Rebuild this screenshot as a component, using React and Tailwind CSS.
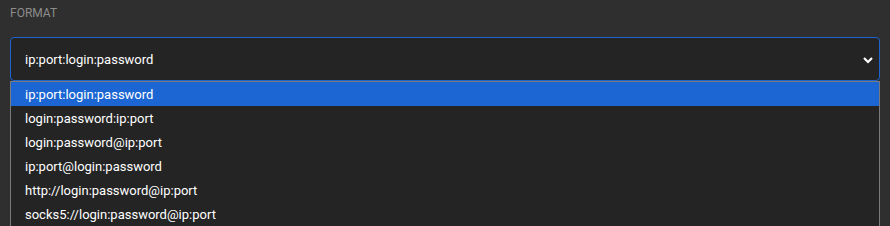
import React from "react";

const options = [
  "ip:port:login:password",
  "login:password:ip:port",
  "login:password@ip:port",
  "ip:port@login:password",
  "http://login:password@ip:port",
  "socks5://login:password@ip:port",
];

function App() {
  return (
    <div className="w-[890px] h-[226px] overflow-hidden bg-[#2f2f2f] font-['Roboto',sans-serif]">
      <div className="px-[10px] pt-[6px]">
        <div className="text-[12px] leading-[15px] text-[#8c8c8c] uppercase">Format</div>

        {/* select box */}
        <div className="mt-[16px] h-[44px] border border-[#1d64cf] rounded-[4px] bg-[#242424] flex items-center justify-between pl-[14px] pr-[4px]">
          <span className="text-[13px] text-white pt-[2px]">ip:port:login:password</span>
          <svg width="14" height="14" viewBox="0 0 14 14" className="mt-[2px]">
            <path d="M3 5 L7 9 L11 5" fill="none" stroke="white" strokeWidth="2.2" />
          </svg>
        </div>

        {/* open dropdown */}
        <div className="border-x border-t border-[#7a7a7a] bg-[#242424]">
          {options.map((opt, i) => (
            <div
              key={i}
              className={
                i === 0
                  ? "h-[24px] flex items-center pl-[14px] pt-[1px] text-[13px] text-white bg-[#1b66d2]"
                  : "h-[24px] flex items-center pl-[14px] pt-[1px] text-[13px] text-white"
              }
            >
              {opt}
            </div>
          ))}
        </div>
      </div>
    </div>
  );
}

export default App;
